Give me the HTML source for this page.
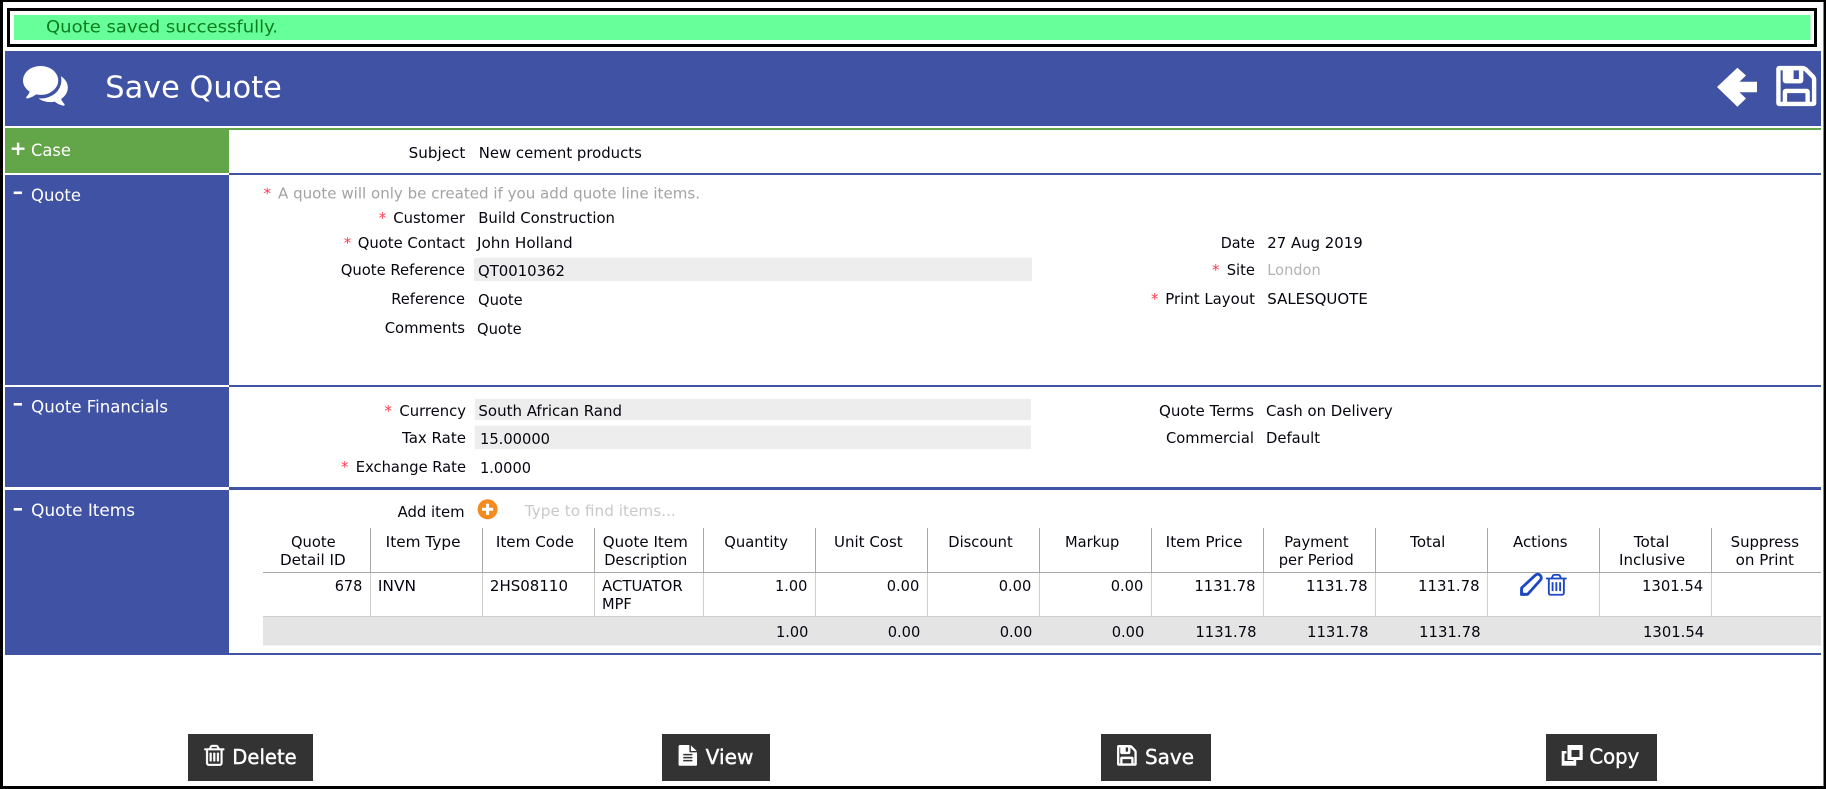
<!DOCTYPE html>
<html lang="en">
<head>
<meta charset="utf-8">
<title>Save Quote</title>
<style>
html,body{margin:0;padding:0;background:#fff;width:1826px;height:789px;overflow:hidden}
svg{display:block;font-family:"DejaVu Sans","Liberation Sans",sans-serif;font-size:15px;fill:#05050f}
.h{font-size:16.5px;fill:#fff}
.g{fill:#a3a3a3}
.r{fill:#ff3b52}
.b{font-size:20px;fill:#fff;stroke:#fff;stroke-width:.4}
</style>
</head>
<body>
<svg width="1826" height="789" viewBox="0 0 1826 789" xmlns="http://www.w3.org/2000/svg">
<rect width="1826" height="789" fill="#000"/>
<rect x="3" y="2" width="1820.5" height="784" fill="#fff"/>

<!-- notification -->
<rect x="7" y="8" width="1810" height="39" fill="#000"/>
<rect x="10" y="11" width="1804" height="33" fill="#fff"/>
<rect x="14" y="15" width="1796.5" height="25" fill="#66ff99"/>
<text x="46" y="32.5" style="font-size:16.5px;fill:#0b7d1c" textLength="232" lengthAdjust="spacingAndGlyphs">Quote saved successfully.</text>

<!-- header -->
<rect x="5" y="51" width="1816" height="75" fill="#4052a3"/>
<path transform="translate(23,66) scale(.025,.0282) translate(0,-256)" fill="#fff" d="M1408 768q0 139-94 257t-256.500 186.500-353.500 68.500q-86 0-176-16-124 88-278 128-36 9-86 16h-3q-11 0-20.500-8t-11.500-21q-1-3-1-6.500t.5-6.500 2-6l2.500-5 3.500-5.500 4-5 4.500-5 4-4.500q5-6 23-25t26-29.500 22.500-29 25-38.500 20.500-44q-124-72-195-177t-71-224q0-139 94-257t256.500-186.500 353.500-68.500 353.500 68.500 256.500 186.500 94 257zm384 256q0 120-71 224.500t-195 176.500q10 24 20.500 44t25 38.500 22.500 29 26 29.500 23 25q1 1 4 4.500t4.500 5 4 5 3.500 5.500l2.500 5 2 6 .5 6.500-1 6.500q-3 14-13 22t-22 7q-50-7-86-16-154-40-278-128-90 16-176 16-271 0-472-132 58 4 88 4 161 0 309-45t264-129q125-92 192-212t67-254q0-77-23-152 129 71 204 178t75 230z"/>
<text x="105.3" y="97.7" style="font-size:30px;fill:#fff" textLength="176.5" lengthAdjust="spacingAndGlyphs">Save Quote</text>
<polygon fill="#fff" points="1717,87 1737.4,67.7 1746,75.5 1739.5,81.7 1757,81.7 1757,92.3 1739.5,92.3 1746,98.5 1737.4,106.7"/>
<path transform="translate(1776.8,66.5) scale(.02535,.02545) translate(-128,-128)" fill="#fff" stroke="#fff" stroke-width="45" d="M512 1536h768v-384h-768v384zm896 0h128v-896q0-14-10-38.500t-20-34.500l-281-281q-10-10-34-20t-39-10v416q0 40-28 68t-68 28h-576q-40 0-68-28t-28-68v-416h-128v1280h128v-416q0-40 28-68t68-28h832q40 0 68 28t28 68v416zm-384-928v-320q0-13-9.500-22.500t-22.500-9.500h-192q-13 0-22.500 9.500t-9.500 22.500v320q0 13 9.500 22.500t22.500 9.500h192q13 0 22.500-9.500t9.500-22.500zm640 32v928q0 40-28 68t-68 28h-1344q-40 0-68-28t-28-68v-1344q0-40 28-68t68-28h928q40 0 88 20t76 48l280 280q28 28 48 76t20 88z"/>

<!-- sidebars and dividers -->
<rect x="5" y="128" width="1816" height="2" fill="#63a64a"/>
<rect x="5" y="128" width="224" height="45" fill="#63a64a"/>
<rect x="5" y="175" width="224" height="210" fill="#4052a3"/>
<rect x="5" y="387" width="224" height="100" fill="#4052a3"/>
<rect x="5" y="490" width="224" height="165" fill="#4052a3"/>
<rect x="229" y="173" width="1592" height="2" fill="#4052a3"/>
<rect x="229" y="385" width="1592" height="2" fill="#4052a3"/>
<rect x="229" y="487" width="1592" height="3" fill="#4052a3"/>
<rect x="229" y="653" width="1592" height="2" fill="#4052a3"/>

<rect x="11.7" y="147.5" width="12.8" height="2.4" fill="#fff"/>
<rect x="16.9" y="142.7" width="2.4" height="12.3" fill="#fff"/>
<rect x="13.7" y="191.5" width="8.3" height="2.6" fill="#fff"/>
<rect x="13.7" y="403" width="8.3" height="2.6" fill="#fff"/>
<rect x="13.7" y="508" width="8.3" height="2.6" fill="#fff"/>
<text class="h" x="31" y="156" textLength="40" lengthAdjust="spacingAndGlyphs">Case</text>
<text class="h" x="31" y="201" textLength="50" lengthAdjust="spacingAndGlyphs">Quote</text>
<text class="h" x="31.2" y="412.7" textLength="136.8" lengthAdjust="spacingAndGlyphs">Quote Financials</text>
<text class="h" x="31.2" y="516" textLength="103.8" lengthAdjust="spacingAndGlyphs">Quote Items</text>

<!-- case -->
<text x="408.7" y="158" textLength="56.6" lengthAdjust="spacingAndGlyphs">Subject</text>
<text x="478.7" y="158" textLength="163.2" lengthAdjust="spacingAndGlyphs">New cement products</text>

<!-- quote -->
<text class="r" x="263.5" y="198.7">*</text>
<text class="g" x="278" y="198.7" textLength="422" lengthAdjust="spacingAndGlyphs">A quote will only be created if you add quote line items.</text>
<text class="r" x="378.7" y="223">*</text>
<text x="393.3" y="223" textLength="71.7" lengthAdjust="spacingAndGlyphs">Customer</text>
<text x="478.2" y="223" textLength="136.8" lengthAdjust="spacingAndGlyphs">Build Construction</text>
<text class="r" x="343.7" y="248">*</text>
<text x="357.7" y="248" textLength="107.3" lengthAdjust="spacingAndGlyphs">Quote Contact</text>
<text x="477" y="248" textLength="95.7" lengthAdjust="spacingAndGlyphs">John Holland</text>
<rect x="474" y="257.7" width="558" height="23.3" fill="#ededed"/>
<text x="340.7" y="275" textLength="124.3" lengthAdjust="spacingAndGlyphs">Quote Reference</text>
<text x="478" y="276" textLength="87" lengthAdjust="spacingAndGlyphs">QT0010362</text>
<text x="391.3" y="304" textLength="73.7" lengthAdjust="spacingAndGlyphs">Reference</text>
<text x="478" y="305" textLength="44.7" lengthAdjust="spacingAndGlyphs">Quote</text>
<text x="384.7" y="333" textLength="80.3" lengthAdjust="spacingAndGlyphs">Comments</text>
<text x="477" y="334" textLength="44.7" lengthAdjust="spacingAndGlyphs">Quote</text>

<text x="1220.7" y="248" textLength="34.3" lengthAdjust="spacingAndGlyphs">Date</text>
<text x="1267.3" y="248" textLength="95.4" lengthAdjust="spacingAndGlyphs">27 Aug 2019</text>
<text class="r" x="1212" y="275">*</text>
<text x="1226.7" y="275" textLength="28.3" lengthAdjust="spacingAndGlyphs">Site</text>
<text x="1267.3" y="275" textLength="53.4" lengthAdjust="spacingAndGlyphs" style="fill:#b3b3b3">London</text>
<text class="r" x="1151" y="304">*</text>
<text x="1165.3" y="304" textLength="89.7" lengthAdjust="spacingAndGlyphs">Print Layout</text>
<text x="1267.3" y="304" textLength="100.5" lengthAdjust="spacingAndGlyphs">SALESQUOTE</text>

<!-- financials -->
<rect x="474.7" y="399" width="556.3" height="21" fill="#ededed"/>
<rect x="474.7" y="425.7" width="556.3" height="23.3" fill="#ededed"/>
<text class="r" x="384.5" y="416">*</text>
<text x="399.4" y="416" textLength="66.6" lengthAdjust="spacingAndGlyphs">Currency</text>
<text x="478.4" y="416" textLength="143.6" lengthAdjust="spacingAndGlyphs">South African Rand</text>
<text x="402" y="443" textLength="64" lengthAdjust="spacingAndGlyphs">Tax Rate</text>
<text x="480" y="444" textLength="70" lengthAdjust="spacingAndGlyphs">15.00000</text>
<text class="r" x="341" y="472">*</text>
<text x="355.8" y="472" textLength="110.2" lengthAdjust="spacingAndGlyphs">Exchange Rate</text>
<text x="480" y="473" textLength="51" lengthAdjust="spacingAndGlyphs">1.0000</text>
<text x="1159" y="416" textLength="95" lengthAdjust="spacingAndGlyphs">Quote Terms</text>
<text x="1266" y="416" textLength="126.7" lengthAdjust="spacingAndGlyphs">Cash on Delivery</text>
<text x="1166" y="443" textLength="88" lengthAdjust="spacingAndGlyphs">Commercial</text>
<text x="1266" y="443" textLength="54" lengthAdjust="spacingAndGlyphs">Default</text>

<!-- items -->
<text x="397.6" y="517" textLength="67" lengthAdjust="spacingAndGlyphs">Add item</text>
<circle cx="487.6" cy="509.3" r="10" fill="#f58a1f"/>
<rect x="482" y="507.8" width="11.2" height="3" fill="#fff"/>
<rect x="486.1" y="503.7" width="3" height="11.2" fill="#fff"/>
<text x="524.8" y="516" textLength="151" lengthAdjust="spacingAndGlyphs" style="fill:#c9c9c9">Type to find items...</text>

<!-- table -->
<rect x="263" y="617" width="1558" height="28.5" fill="#e4e4e4"/>
<g fill="#a8a8a8">
<rect x="370" y="528" width="1" height="44"/><rect x="482" y="528" width="1" height="44"/><rect x="594" y="528" width="1" height="44"/><rect x="703" y="528" width="1" height="44"/><rect x="815" y="528" width="1" height="44"/><rect x="927" y="528" width="1" height="44"/><rect x="1039" y="528" width="1" height="44"/><rect x="1151" y="528" width="1" height="44"/><rect x="1263" y="528" width="1" height="44"/><rect x="1375" y="528" width="1" height="44"/><rect x="1487" y="528" width="1" height="44"/><rect x="1599" y="528" width="1" height="44"/><rect x="1711" y="528" width="1" height="44"/>
<rect x="263" y="572" width="1558" height="1"/>
</g>
<g fill="#cfcfcf">
<rect x="370" y="573" width="1" height="44"/><rect x="482" y="573" width="1" height="44"/><rect x="594" y="573" width="1" height="44"/><rect x="703" y="573" width="1" height="44"/><rect x="815" y="573" width="1" height="44"/><rect x="927" y="573" width="1" height="44"/><rect x="1039" y="573" width="1" height="44"/><rect x="1151" y="573" width="1" height="44"/><rect x="1263" y="573" width="1" height="44"/><rect x="1375" y="573" width="1" height="44"/><rect x="1487" y="573" width="1" height="44"/><rect x="1599" y="573" width="1" height="44"/><rect x="1711" y="573" width="1" height="44"/>
<rect x="263" y="616" width="1558" height="1"/>
</g>

<text x="291" y="547" textLength="44.6" lengthAdjust="spacingAndGlyphs">Quote</text>
<text x="280" y="565" textLength="65.7" lengthAdjust="spacingAndGlyphs">Detail ID</text>
<text x="385.7" y="547" textLength="74.8" lengthAdjust="spacingAndGlyphs">Item Type</text>
<text x="495.9" y="547" textLength="78.1" lengthAdjust="spacingAndGlyphs">Item Code</text>
<text x="602.8" y="547" textLength="85" lengthAdjust="spacingAndGlyphs">Quote Item</text>
<text x="604.2" y="565" textLength="83.1" lengthAdjust="spacingAndGlyphs">Description</text>
<text x="724.3" y="547" textLength="63.7" lengthAdjust="spacingAndGlyphs">Quantity</text>
<text x="834" y="547" textLength="68.7" lengthAdjust="spacingAndGlyphs">Unit Cost</text>
<text x="948.3" y="547" textLength="64.4" lengthAdjust="spacingAndGlyphs">Discount</text>
<text x="1065" y="547" textLength="54.3" lengthAdjust="spacingAndGlyphs">Markup</text>
<text x="1165.7" y="547" textLength="76.9" lengthAdjust="spacingAndGlyphs">Item Price</text>
<text x="1284.3" y="547" textLength="64.3" lengthAdjust="spacingAndGlyphs">Payment</text>
<text x="1278.7" y="565" textLength="75" lengthAdjust="spacingAndGlyphs">per Period</text>
<text x="1410.2" y="547" textLength="35.2" lengthAdjust="spacingAndGlyphs">Total</text>
<text x="1513" y="547" textLength="54.6" lengthAdjust="spacingAndGlyphs">Actions</text>
<text x="1633.8" y="547" textLength="35.6" lengthAdjust="spacingAndGlyphs">Total</text>
<text x="1619" y="565" textLength="66.2" lengthAdjust="spacingAndGlyphs">Inclusive</text>
<text x="1730.6" y="547" textLength="68.4" lengthAdjust="spacingAndGlyphs">Suppress</text>
<text x="1735.6" y="565" textLength="58.4" lengthAdjust="spacingAndGlyphs">on Print</text>

<text x="334.7" y="591" textLength="27.6" lengthAdjust="spacingAndGlyphs">678</text>
<text x="377.9" y="591" textLength="38.1" lengthAdjust="spacingAndGlyphs">INVN</text>
<text x="489.9" y="591" textLength="78.1" lengthAdjust="spacingAndGlyphs">2HS08110</text>
<text x="602" y="591" textLength="80.7" lengthAdjust="spacingAndGlyphs">ACTUATOR</text>
<text x="602" y="609" textLength="29.8" lengthAdjust="spacingAndGlyphs">MPF</text>
<text x="775" y="591" textLength="32.3" lengthAdjust="spacingAndGlyphs">1.00</text>
<text x="886.7" y="591" textLength="32.6" lengthAdjust="spacingAndGlyphs">0.00</text>
<text x="998.7" y="591" textLength="32.6" lengthAdjust="spacingAndGlyphs">0.00</text>
<text x="1110.7" y="591" textLength="32.6" lengthAdjust="spacingAndGlyphs">0.00</text>
<text x="1194.4" y="591" textLength="61.2" lengthAdjust="spacingAndGlyphs">1131.78</text>
<text x="1306" y="591" textLength="61.6" lengthAdjust="spacingAndGlyphs">1131.78</text>
<text x="1418" y="591" textLength="61.6" lengthAdjust="spacingAndGlyphs">1131.78</text>
<text x="1642" y="591" textLength="61.2" lengthAdjust="spacingAndGlyphs">1301.54</text>

<!-- pencil: outlined diagonal body, filled tip -->
<path fill="#fff" stroke="#1c48c4" stroke-width="2.8" stroke-linejoin="round" d="M1521.6 594.3v-6.4l13.6-12.6q2.6-2.2 5 0q2.2 2.4 0 5l-12.6 14z"/>
<path fill="#1c48c4" d="M1520.2 595.7v-6.5l6.4 6.5z"/>
<path transform="translate(1546,574) scale(.0147,.0141) translate(-192,-128)" fill="#1c48c4" d="M704 736v576q0 14-9 23t-23 9h-64q-14 0-23-9t-9-23v-576q0-14 9-23t23-9h64q14 0 23 9t9 23zm256 0v576q0 14-9 23t-23 9h-64q-14 0-23-9t-9-23v-576q0-14 9-23t23-9h64q14 0 23 9t9 23zm256 0v576q0 14-9 23t-23 9h-64q-14 0-23-9t-9-23v-576q0-14 9-23t23-9h64q14 0 23 9t9 23zm128 724v-948h-896v948q0 22 7 40.500t14.500 27 10.500 8.500h832q3 0 10.500-8.500t14.500-27 7-40.500zm-672-1076h448l-48-117q-7-9-17-11h-317q-10 2-17 11zm928 32v64q0 14-9 23t-23 9h-96v948q0 83-47 143.500t-113 60.500h-832q-66 0-113-58.500t-47-141.500v-952h-96q-14 0-23-9t-9-23v-64q0-14 9-23t23-9h309l70-167q15-37 54-63t79-26h320q40 0 79 26t54 63l70 167h309q14 0 23 9t9 23z"/>

<text x="776" y="637" textLength="32.3" lengthAdjust="spacingAndGlyphs">1.00</text>
<text x="887.7" y="637" textLength="32.6" lengthAdjust="spacingAndGlyphs">0.00</text>
<text x="999.7" y="637" textLength="32.6" lengthAdjust="spacingAndGlyphs">0.00</text>
<text x="1111.7" y="637" textLength="32.6" lengthAdjust="spacingAndGlyphs">0.00</text>
<text x="1195.4" y="637" textLength="61.1" lengthAdjust="spacingAndGlyphs">1131.78</text>
<text x="1307" y="637" textLength="61.5" lengthAdjust="spacingAndGlyphs">1131.78</text>
<text x="1419" y="637" textLength="61.6" lengthAdjust="spacingAndGlyphs">1131.78</text>
<text x="1643" y="637" textLength="61.2" lengthAdjust="spacingAndGlyphs">1301.54</text>

<!-- buttons -->
<rect x="188" y="734" width="125" height="47" fill="#333"/>
<path transform="translate(204.3,745) scale(.0142,.01348) translate(-192,-128)" fill="#fff" stroke="#fff" stroke-width="25" d="M704 736v576q0 14-9 23t-23 9h-64q-14 0-23-9t-9-23v-576q0-14 9-23t23-9h64q14 0 23 9t9 23zm256 0v576q0 14-9 23t-23 9h-64q-14 0-23-9t-9-23v-576q0-14 9-23t23-9h64q14 0 23 9t9 23zm256 0v576q0 14-9 23t-23 9h-64q-14 0-23-9t-9-23v-576q0-14 9-23t23-9h64q14 0 23 9t9 23zm128 724v-948h-896v948q0 22 7 40.500t14.500 27 10.500 8.500h832q3 0 10.500-8.500t14.500-27 7-40.500zm-672-1076h448l-48-117q-7-9-17-11h-317q-10 2-17 11zm928 32v64q0 14-9 23t-23 9h-96v948q0 83-47 143.500t-113 60.500h-832q-66 0-113-58.500t-47-141.500v-952h-96q-14 0-23-9t-9-23v-64q0-14 9-23t23-9h309l70-167q15-37 54-63t79-26h320q40 0 79 26t54 63l70 167h309q14 0 23 9t9 23z"/>
<text class="b" x="232.3" y="764" textLength="64.4" lengthAdjust="spacingAndGlyphs">Delete</text>

<rect x="662" y="734" width="108" height="47" fill="#333"/>
<path transform="translate(678.6,745) scale(.012,.0116) translate(-128,0)" fill="#fff" d="M1596 476q14 14 28 36h-472v-472q22 14 36 28zm-476 164h544v1056q0 40-28 68t-68 28h-1344q-40 0-68-28t-28-68v-1600q0-40 28-68t68-28h800v544q0 40 28 68t68 28zm160 736v-64q0-14-9-23t-23-9h-704q-14 0-23 9t-9 23v64q0 14 9 23t23 9h704q14 0 23-9t9-23zm0-256v-64q0-14-9-23t-23-9h-704q-14 0-23 9t-9 23v64q0 14 9 23t23 9h704q14 0 23-9t9-23zm0-256v-64q0-14-9-23t-23-9h-704q-14 0-23 9t-9 23v64q0 14 9 23t23 9h704q14 0 23-9t9-23z"/>
<text class="b" x="705.7" y="764" textLength="47.7" lengthAdjust="spacingAndGlyphs">View</text>

<rect x="1101" y="734" width="110" height="47" fill="#333"/>
<path transform="translate(1117.4,745.4) scale(.01235,.0130) translate(-128,-128)" fill="#fff" stroke="#fff" stroke-width="60" d="M512 1536h768v-384h-768v384zm896 0h128v-896q0-14-10-38.500t-20-34.500l-281-281q-10-10-34-20t-39-10v416q0 40-28 68t-68 28h-576q-40 0-68-28t-28-68v-416h-128v1280h128v-416q0-40 28-68t68-28h832q40 0 68 28t28 68v416zm-384-928v-320q0-13-9.500-22.500t-22.500-9.500h-192q-13 0-22.500 9.500t-9.500 22.500v320q0 13 9.500 22.500t22.500 9.500h192q13 0 22.500-9.500t9.500-22.500zm640 32v928q0 40-28 68t-68 28h-1344q-40 0-68-28t-28-68v-1344q0-40 28-68t68-28h928q40 0 88 20t76 48l280 280q28 28 48 76t20 88z"/>
<text class="b" x="1145" y="764" textLength="49" lengthAdjust="spacingAndGlyphs">Save</text>

<rect x="1546" y="734" width="111" height="47" fill="#333"/>
<rect x="1561.7" y="751" width="14.5" height="14.7" fill="#fff"/>
<rect x="1564.5" y="753.5" width="9" height="7.5" fill="#333"/>
<rect x="1566.5" y="745" width="16.2" height="15" fill="#333"/>
<rect x="1567.5" y="745" width="15.2" height="15" fill="#fff"/>
<rect x="1571.5" y="750" width="8" height="7" fill="#333"/>
<text class="b" x="1589.4" y="763.7" textLength="49.9" lengthAdjust="spacingAndGlyphs">Copy</text>
</svg>
</body>
</html>
